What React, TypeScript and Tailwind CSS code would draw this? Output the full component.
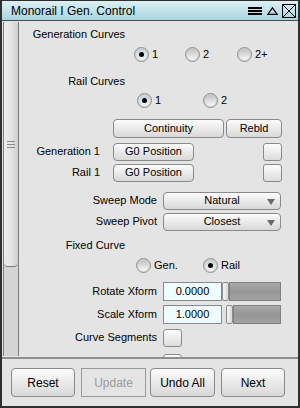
import React from 'react';
import clsx from 'clsx';

const Radio = ({ checked }: { checked?: boolean }) => (
  <span
    className={clsx(
      'flex h-[15px] w-[15px] shrink-0 items-center justify-center rounded-full border border-[#8f8f8f] shadow-[inset_0_0_0_1px_#cfcfcf]',
      checked
        ? 'bg-linear-to-b from-[#c3ced6] to-[#f4f8fa]'
        : 'bg-linear-to-b from-[#bdbdbd] via-[#dcdcdc] to-[#fdfdfd]'
    )}
  >
    {checked && <span className="h-[5px] w-[5px] rounded-full bg-black" />}
  </span>
);

const Option = ({ label, checked, w }: { label: string; checked?: boolean; w: string }) => (
  <div className={clsx('flex items-center', w)}>
    <Radio checked={checked} />
    <span className="ml-[3px]">{label}</span>
  </div>
);

const Btn = ({ children, className }: { children: React.ReactNode; className?: string }) => (
  <div
    className={clsx(
      'flex items-center justify-center rounded-[4px] border border-[#8a8a8a] bg-linear-to-b from-[#fcfcfc] to-[#d8d8d8]',
      className
    )}
  >
    {children}
  </div>
);

const Check = ({ className }: { className?: string }) => (
  <div
    className={clsx(
      'h-[18px] w-[19px] rounded-[3px] border border-[#8a8a8a] bg-linear-to-b from-[#fdfdfd] to-[#dcdcdc]',
      className
    )}
  />
);

const Dropdown = ({ value }: { value: string }) => (
  <Btn className="relative ml-[6px] h-full w-[118px]">
    <span>{value}</span>
    <svg className="absolute right-[5px] top-[6px]" width="8" height="6" viewBox="0 0 8 6">
      <path d="M0 0 H8 L4 6 Z" fill="#6a6a6a" />
    </svg>
  </Btn>
);

const SliderRow = ({ label, value, fill }: { label: string; value: string; fill: string }) => (
  <div className="flex h-[19px] items-stretch">
    <div className="flex w-[137px] items-center justify-end">{label}</div>
    <div className="ml-[6px] flex w-[59px] items-center justify-center border border-[#8a8a8a] bg-[#effcff]">
      {value}
    </div>
    <div className="flex w-[59px]">
      <div className={clsx('bg-[#e2e2e2]', fill)} />
      <div className="w-[7px] rounded-[2px] border border-[#8a8a8a] bg-linear-to-r from-[#f6f6f6] to-[#d8d8d8]" />
      <div className="flex-1 border border-[#808080] bg-linear-to-b from-[#a9a9a9] via-[#969696] to-[#a2a2a2]" />
    </div>
  </div>
);

export default function App() {
  return (
    <div className="flex h-[408px] w-[300px] flex-col overflow-hidden border-x-2 border-t border-b-2 border-[#2f2f2f] bg-[#e4e4e4] font-['Liberation_Sans',Arial,sans-serif] text-[11px] text-black">
      {/* title bar */}
      <div className="flex h-[20px] shrink-0 items-center border-b border-[#4a4a4a] bg-linear-to-b from-[#dcf0f4] to-[#a7d5df] pl-[9px] pr-[2px]">
        <span className="text-[12px]">Monorail I Gen. Control</span>
        <div className="ml-auto flex items-center">
          <svg width="14" height="8" viewBox="0 0 14 8">
            <rect x="0" y="0" width="14" height="2" fill="#000" />
            <rect x="0" y="3" width="14" height="2" fill="#000" />
            <rect x="0" y="6" width="14" height="2" fill="#000" />
          </svg>
          <svg className="ml-[5px]" width="11" height="8" viewBox="0 0 11 8">
            <path d="M5.5 0.8 L10.2 7.3 H0.8 Z" fill="none" stroke="#000" strokeWidth="1.2" />
          </svg>
          <svg className="ml-[4px]" width="14" height="14" viewBox="0 0 14 14">
            <rect x="0.5" y="0.5" width="13" height="13" fill="none" stroke="#000" />
            <path d="M1 1 L13 13 M13 1 L1 13" stroke="#000" strokeWidth="1" />
          </svg>
        </div>
      </div>

      {/* main */}
      <div className="flex h-[336px] shrink-0 overflow-hidden">
        {/* scrollbar */}
        <div className="ml-[1px] mt-[1px] flex h-[334px] w-[16px] shrink-0 flex-col border-x border-[#7e7e7e] bg-[#d4d4d4]">
          <div className="flex h-[245px] items-center justify-center rounded-b-[4px] rounded-t-[3px] border-b border-[#7e7e7e] bg-linear-to-r from-[#ececec] via-[#e4e4e4] to-[#cfcfcf]">
            <div className="flex flex-col gap-[2px]">
              <div className="h-[1px] w-[8px] bg-[#8a8a8a]" />
              <div className="h-[1px] w-[8px] bg-[#8a8a8a]" />
              <div className="h-[1px] w-[8px] bg-[#8a8a8a]" />
            </div>
          </div>
        </div>

        {/* content */}
        <div className="ml-[1px] flex flex-1 flex-col">
          <div className="mt-[6px] h-[14px] w-[105px] text-right leading-[14px]">Generation Curves</div>
          <div className="mt-[6px] flex h-[15px] items-center pl-[114px]">
            <Option label="1" checked w="w-[51px]" />
            <Option label="2" w="w-[52px]" />
            <Option label="2+" w="w-[40px]" />
          </div>

          <div className="mt-[12px] h-[14px] w-[105px] text-right leading-[14px]">Rail Curves</div>
          <div className="mt-[5px] flex h-[15px] items-center pl-[117px]">
            <Option label="1" checked w="w-[66px]" />
            <Option label="2" w="w-[40px]" />
          </div>

          <div className="mt-[11px] flex h-[20px] pl-[93px]">
            <Btn className="w-[111px]">Continuity</Btn>
            <Btn className="ml-[2px] w-[56px]">Rebld</Btn>
          </div>

          <div className="mt-[5px] flex h-[18px] items-stretch">
            <div className="flex w-[80px] items-center justify-end">Generation 1</div>
            <Btn className="ml-[13px] w-[81px]">G0 Position</Btn>
            <Check className="ml-[69px]" />
          </div>
          <div className="mt-[3px] flex h-[18px] items-stretch">
            <div className="flex w-[80px] items-center justify-end">Rail 1</div>
            <Btn className="ml-[13px] w-[81px]">G0 Position</Btn>
            <Check className="ml-[69px]" />
          </div>

          <div className="mt-[10px] flex h-[18px] items-stretch">
            <div className="flex w-[137px] items-center justify-end">Sweep Mode</div>
            <Dropdown value="Natural" />
          </div>
          <div className="mt-[3px] flex h-[18px] items-stretch">
            <div className="flex w-[137px] items-center justify-end">Sweep Pivot</div>
            <Dropdown value="Closest" />
          </div>

          <div className="mt-[7px] h-[14px] w-[105px] text-right leading-[14px]">Fixed Curve</div>
          <div className="mt-[6px] flex h-[15px] items-center pl-[116px]">
            <Option label="Gen." w="w-[67px]" />
            <Option label="Rail" checked w="w-[40px]" />
          </div>

          <div className="mt-[9px]">
            <SliderRow label="Rotate Xform" value="0.0000" fill="w-0" />
          </div>
          <div className="mt-[4px]">
            <SliderRow label="Scale Xform" value="1.0000" fill="w-[4px]" />
          </div>

          <div className="mt-[5px] flex h-[18px] items-stretch">
            <div className="flex w-[137px] items-center justify-end">Curve Segments</div>
            <Check className="ml-[6px]" />
          </div>
          <div className="mt-[7px] flex h-[18px] shrink-0">
            <Check className="ml-[143px]" />
          </div>
        </div>
      </div>

      <div className="h-[2px] shrink-0 bg-[#8e8e8e]" />

      {/* footer */}
      <div className="flex flex-1 items-start pl-[9px] pt-[9px]">
        <Btn className="h-[29px] w-[64px] text-[12px]">Reset</Btn>
        <div className="ml-[6px] flex h-[29px] w-[65px] items-center justify-center border border-[#9a9a9a] text-[12px] text-[#9c9c9c]">
          Update
        </div>
        <Btn className="ml-[4px] h-[29px] w-[65px] text-[12px]">Undo All</Btn>
        <Btn className="ml-[6px] h-[29px] w-[64px] text-[12px]">Next</Btn>
      </div>
    </div>
  );
}
